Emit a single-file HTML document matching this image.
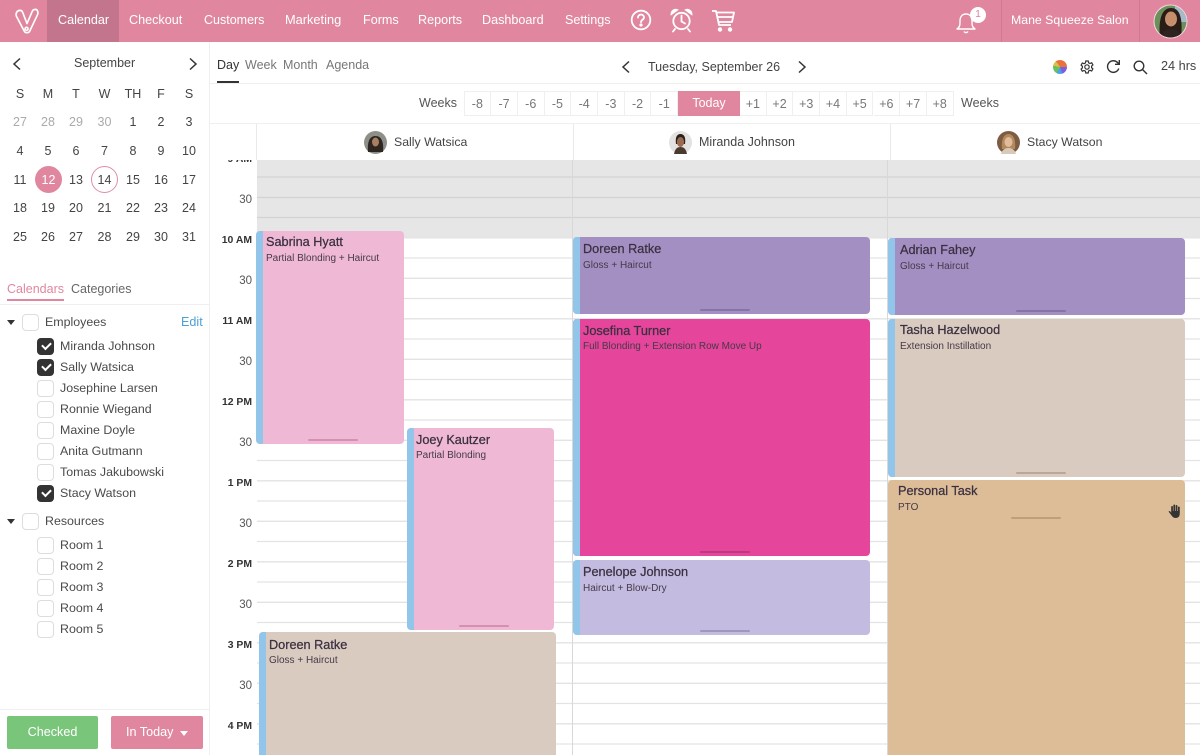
<!DOCTYPE html>
<html><head><meta charset="utf-8"><style>
html,body{margin:0;padding:0;background:#fff}
#p{position:relative;width:1200px;height:755px;overflow:hidden;background:#fff;font-family:"Liberation Sans",sans-serif;color:#444;font-size:13px}
#p div,#p span,#p svg{position:absolute}
#p span{white-space:nowrap;line-height:16px}
.n{color:#fff;top:12px;font-size:12.6px}
.d{width:28px;text-align:center;color:#444;font-size:12.5px}
.g{color:#aaa}
.w{top:91px;height:25px;width:26.7px;box-sizing:border-box;border:1px solid #efefef;border-left:0;text-align:center;line-height:24px;color:#777;font-size:12.5px}
.t{right:948px;text-align:right;color:#555;font-size:11.5px;margin-top:1px}
.b{font-weight:bold;color:#333;font-size:10.4px}
.e{border-radius:4px;overflow:hidden}
.e i{position:absolute;left:0;top:0;bottom:0;width:7px;background:#92c5ea}
.nm{font-size:12.7px;color:#3a3040;-webkit-text-stroke:.25px #3a3040}
.sb{font-size:10px;color:#443a48;margin-top:1px}
.h{height:2px;width:50px;border-radius:1px}
.c{width:15px;height:15px;border:1px solid #ddd;border-radius:4px;background:#fff}
.k{width:17px;height:17px;border-radius:4px;background:#333}
.k:after{content:"";position:absolute;left:4.5px;top:3px;width:7px;height:4px;border:solid #fff;border-width:0 0 2px 2px;transform:rotate(-45deg);transform-origin:center;margin-top:1px}
.l{left:60px;font-size:12.4px;color:#4a4a4a}
.ch{font-size:12.3px;color:#444;top:134px}
</style></head><body><div id="p">

<!-- top bar -->
<div style="left:0;top:0;width:1200px;height:42px;background:#e0879f"></div>
<div style="left:47px;top:0;width:72px;height:42px;background:#c4758e"></div>
<svg style="left:14px;top:8px" width="26" height="26" viewBox="0 0 30 30" fill="none" stroke="#fff" stroke-width="1.900" stroke-linejoin="round"><path d="M3 5c2-3 6-3 7 0l5 13 6-14c1-3 5-3 6-1s1 3 0 5L18 27c-1 2-5 2-6 0L3 10c-1-2-1-3 0-5z"/><circle cx="14.500" cy="24" r="1.700"/></svg>
<span class="n" style="left:58px">Calendar</span>
<span class="n" style="left:129px">Checkout</span>
<span class="n" style="left:204px;font-size:12.500px">Customers</span>
<span class="n" style="left:285px;font-size:12.800px">Marketing</span>
<span class="n" style="left:363px">Forms</span>
<span class="n" style="left:418px">Reports</span>
<span class="n" style="left:482px">Dashboard</span>
<span class="n" style="left:565px">Settings</span>
<svg style="left:630px;top:9px" width="22" height="22" viewBox="0 0 22 22" fill="none" stroke="#fff" stroke-width="1.800"><circle cx="11" cy="11" r="9.300"/><path d="M8 8.600c0-4 6-4 6-.2 0 2.400-3 2.300-3 4.800" stroke-linecap="round"/><circle cx="11" cy="16" r=".7"/></svg>
<svg style="left:670px;top:8px" width="23" height="25" viewBox="0 0 23 25" fill="none" stroke="#fff" stroke-width="1.800" stroke-linecap="round"><circle cx="11.500" cy="13" r="8.200"/><path d="M11.500 7.500V13.500L15 15.500"/><path d="M1.500 6c0-3 3-5 5.500-4zM21.500 6c0-3-3-5-5.500-4z"/><path d="M5 21l-2 2.500M18 21l2 2.500"/></svg>
<svg style="left:711px;top:9px" width="25" height="24" viewBox="0 0 25 24" fill="none" stroke="#fff" stroke-width="1.800" stroke-linejoin="round"><path d="M1 2h4l3 14h12"/><path d="M5.500 3.500H23l-2 9.500H7.500"/><path d="M6.500 8H22"/><circle cx="9" cy="20.500" r="1.300" fill="#fff"/><circle cx="19" cy="20.500" r="1.300" fill="#fff"/></svg>
<svg style="left:956px;top:10px" width="22" height="24" viewBox="0 0 22 24" fill="none" stroke="#fff" stroke-width="1.400"><path d="M1 19c3-2 3-4 3-8s2-7 6-7 6 3 6 7 0 6 3 8z" stroke-linejoin="round"/><path d="M8 21.500c1 1.500 3 1.500 4 0"/></svg>
<div style="left:970px;top:7px;width:16px;height:16px;border-radius:50%;background:#fff;color:#d9849c;font-size:10px;text-align:center;line-height:16px">1</div>
<div style="left:1001px;top:0;width:1px;height:42px;background:#cf7a92"></div>
<div style="left:1139px;top:0;width:1px;height:42px;background:#cf7a92"></div>
<span class="n" style="left:1011px;font-size:12.300px">Mane Squeeze Salon</span>
<svg style="left:1153px;top:4px" width="35" height="35" viewBox="0 0 35 35"><defs><clipPath id="a0"><circle cx="17.500" cy="17.500" r="16"/></clipPath></defs><circle cx="17.500" cy="17.500" r="17" fill="#f3d9e0"/><g clip-path="url(#a0)"><rect width="35" height="35" fill="#6d8f5c"/><rect x="22" width="13" height="18" fill="#a8b9c9"/><path d="M7 35C5 15 9 4 18 4s12 10 10 31z" fill="#2a1d18"/><ellipse cx="18" cy="15" rx="6" ry="7.500" fill="#c68e6b"/><path d="M13 18c2 3 8 3 10 0-1 3-9 3-10 0z" fill="#fff"/><path d="M8 35c1-8 5-10 10-10s9 2 10 10z" fill="#2e2320"/></g></svg>

<!-- structure lines -->
<div style="left:209px;top:42px;width:1px;height:713px;background:#efefef"></div>
<div style="left:210px;top:83px;width:990px;height:1px;background:#efefef"></div>
<div style="left:210px;top:123px;width:990px;height:1px;background:#efefef"></div>

<!-- mini calendar -->
<svg style="left:11px;top:57px" width="12" height="14" viewBox="0 0 12 14" fill="none" stroke="#333" stroke-width="1.500"><path d="M9 1.500L3 7l6 5.500"/></svg>
<svg style="left:187px;top:57px" width="12" height="14" viewBox="0 0 12 14" fill="none" stroke="#333" stroke-width="1.500"><path d="M3 1.500L9 7l-6 5.500"/></svg>
<span style="left:74px;top:55px;font-size:12.500px;color:#444">September</span>
<span class="d" style="left:6px;top:86px">S</span><span class="d" style="left:34px;top:86px">M</span><span class="d" style="left:62px;top:86px">T</span><span class="d" style="left:90.500px;top:86px">W</span><span class="d" style="left:119px;top:86px">TH</span><span class="d" style="left:147px;top:86px">F</span><span class="d" style="left:175px;top:86px">S</span>
<span class="d g" style="left:6px;top:114px">27</span><span class="d g" style="left:34px;top:114px">28</span><span class="d g" style="left:62px;top:114px">29</span><span class="d g" style="left:90.500px;top:114px">30</span><span class="d" style="left:119px;top:114px">1</span><span class="d" style="left:147px;top:114px">2</span><span class="d" style="left:175px;top:114px">3</span>
<span class="d" style="left:6px;top:143px">4</span><span class="d" style="left:34px;top:143px">5</span><span class="d" style="left:62px;top:143px">6</span><span class="d" style="left:90.500px;top:143px">7</span><span class="d" style="left:119px;top:143px">8</span><span class="d" style="left:147px;top:143px">9</span><span class="d" style="left:175px;top:143px">10</span>
<div style="left:35px;top:166px;width:27px;height:27px;border-radius:50%;background:#e0879f"></div>
<div style="left:91px;top:166px;width:25px;height:25px;border-radius:50%;border:1px solid #dd8fa5"></div>
<span class="d" style="left:6px;top:172px">11</span><span class="d" style="left:34.500px;top:172px;color:#fff">12</span><span class="d" style="left:62px;top:172px">13</span><span class="d" style="left:90.500px;top:172px">14</span><span class="d" style="left:119px;top:172px">15</span><span class="d" style="left:147px;top:172px">16</span><span class="d" style="left:175px;top:172px">17</span>
<span class="d" style="left:6px;top:200px">18</span><span class="d" style="left:34px;top:200px">19</span><span class="d" style="left:62px;top:200px">20</span><span class="d" style="left:90.500px;top:200px">21</span><span class="d" style="left:119px;top:200px">22</span><span class="d" style="left:147px;top:200px">23</span><span class="d" style="left:175px;top:200px">24</span>
<span class="d" style="left:6px;top:229px">25</span><span class="d" style="left:34px;top:229px">26</span><span class="d" style="left:62px;top:229px">27</span><span class="d" style="left:90.500px;top:229px">28</span><span class="d" style="left:119px;top:229px">29</span><span class="d" style="left:147px;top:229px">30</span><span class="d" style="left:175px;top:229px">31</span>

<!-- sidebar list -->
<span style="left:7px;top:281px;color:#e0879f;font-size:12.500px">Calendars</span>
<span style="left:71px;top:281px;color:#666;font-size:12.500px">Categories</span>
<div style="left:7px;top:299px;width:57px;height:2px;background:#e0879f"></div>
<div style="left:0;top:304px;width:209px;height:1px;background:#efefef"></div>
<div style="left:7px;top:320px;width:0;height:0;border:4px solid transparent;border-top:5px solid #333"></div>
<div class="c" style="left:22px;top:314px"></div>
<span class="l" style="left:45px;top:314px">Employees</span>
<span style="left:181px;top:314px;color:#4a9fd8;font-size:12.600px">Edit</span>
<div class="k" style="left:37px;top:338px"></div><span class="l" style="top:338px">Miranda Johnson</span>
<div class="k" style="left:37px;top:359px"></div><span class="l" style="top:359px">Sally Watsica</span>
<div class="c" style="left:37px;top:380px"></div><span class="l" style="top:380px">Josephine Larsen</span>
<div class="c" style="left:37px;top:401px"></div><span class="l" style="top:401px">Ronnie Wiegand</span>
<div class="c" style="left:37px;top:422px"></div><span class="l" style="top:422px">Maxine Doyle</span>
<div class="c" style="left:37px;top:443px"></div><span class="l" style="top:443px">Anita Gutmann</span>
<div class="c" style="left:37px;top:464px"></div><span class="l" style="top:464px">Tomas Jakubowski</span>
<div class="k" style="left:37px;top:485px"></div><span class="l" style="top:485px">Stacy Watson</span>
<div style="left:7px;top:519px;width:0;height:0;border:4px solid transparent;border-top:5px solid #333"></div>
<div class="c" style="left:22px;top:513px"></div>
<span class="l" style="left:45px;top:513px">Resources</span>
<div class="c" style="left:37px;top:537px"></div><span class="l" style="top:537px">Room 1</span>
<div class="c" style="left:37px;top:558px"></div><span class="l" style="top:558px">Room 2</span>
<div class="c" style="left:37px;top:579px"></div><span class="l" style="top:579px">Room 3</span>
<div class="c" style="left:37px;top:600px"></div><span class="l" style="top:600px">Room 4</span>
<div class="c" style="left:37px;top:621px"></div><span class="l" style="top:621px">Room 5</span>
<div style="left:0;top:709px;width:209px;height:1px;background:#efefef"></div>
<div style="left:7px;top:716px;width:91px;height:33px;border-radius:2px;background:#79c67a;color:#fff;text-align:center;line-height:32px;font-size:12.600px">Checked</div>
<div style="left:111px;top:716px;width:92px;height:33px;border-radius:2px;background:#e0879f"></div>
<span style="left:126px;top:724px;color:#fff;font-size:12.600px">In Today</span>
<div style="left:180px;top:731px;width:0;height:0;border:4px solid transparent;border-top:5px solid #fff"></div>

<!-- view tabs -->
<span style="left:217px;top:57px;color:#333;font-size:12.500px">Day</span>
<span style="left:245px;top:57px;color:#777;font-size:12.500px">Week</span>
<span style="left:283px;top:57px;color:#777;font-size:12.500px">Month</span>
<span style="left:326px;top:57px;color:#777;font-size:12.500px">Agenda</span>
<div style="left:217px;top:81px;width:22px;height:2px;background:#333"></div>
<svg style="left:620px;top:60px" width="12" height="14" viewBox="0 0 12 14" fill="none" stroke="#333" stroke-width="1.500"><path d="M9 1.500L3 7l6 5.500"/></svg>
<svg style="left:796px;top:60px" width="12" height="14" viewBox="0 0 12 14" fill="none" stroke="#333" stroke-width="1.500"><path d="M3 1.500L9 7l-6 5.500"/></svg>
<span style="left:648px;top:58.500px;font-size:12.500px;color:#444">Tuesday, September 26</span>
<div style="left:1053px;top:60px;width:14px;height:14px;border-radius:50%;background:conic-gradient(#e8743c 0 25%,#7a5fe0 25% 45%,#4aa3e0 45% 58%,#6cbf5f 58% 78%,#d9c24a 78% 90%,#e8743c 90%)"></div>
<svg style="left:1080px;top:60px" width="14" height="14" viewBox="0 0 14 14" fill="none" stroke="#333" stroke-width="1.200"><path d="M5.800 1h2.400l.4 1.800 1.400.7 1.700-.7 1.200 2.100-1.300 1.200v1.600l1.300 1.200-1.200 2.100-1.700-.7-1.400.7L8.200 13H5.800l-.4-1.800-1.400-.7-1.700.7-1.200-2.100 1.300-1.200V6.300L1.100 5.100l1.200-2.100 1.700.7 1.400-.7z"/><circle cx="7" cy="7" r="2.200"/></svg>
<svg style="left:1106px;top:59px" width="15" height="15" viewBox="0 0 15 15" fill="none" stroke="#333" stroke-width="1.400"><path d="M12.800 9.500A5.800 5.800 0 1 1 11.500 3.500L13 5"/><path d="M13.300 1v4.300H9"/></svg>
<svg style="left:1133px;top:60px" width="15" height="15" viewBox="0 0 15 15" fill="none" stroke="#333" stroke-width="1.400"><circle cx="6" cy="6" r="4.800"/><path d="M9.500 9.500L14 14"/></svg>
<span style="left:1161px;top:58px;font-size:12.700px;color:#444">24 hrs</span>

<!-- week buttons -->
<span style="left:419px;top:95px;font-size:12.500px;color:#555">Weeks</span>
<div style="left:464px;top:91px;width:1px;height:25px;background:#efefef"></div>
<div class="w" style="left:464.500px">-8</div><div class="w" style="left:491.200px">-7</div><div class="w" style="left:517.900px">-6</div><div class="w" style="left:544.600px">-5</div><div class="w" style="left:571.300px">-4</div><div class="w" style="left:598px">-3</div><div class="w" style="left:624.700px">-2</div><div class="w" style="left:651.400px">-1</div>
<div style="left:678px;top:91px;width:62px;height:25px;background:#e0879f;color:#fff;text-align:center;line-height:25px;font-size:12.500px">Today</div>
<div class="w" style="left:740px">+1</div><div class="w" style="left:766.700px">+2</div><div class="w" style="left:793.400px">+3</div><div class="w" style="left:820.100px">+4</div><div class="w" style="left:846.800px">+5</div><div class="w" style="left:873.500px">+6</div><div class="w" style="left:900.200px">+7</div><div class="w" style="left:926.900px">+8</div>
<span style="left:961px;top:95px;font-size:12.500px;color:#555">Weeks</span>

<!-- column headers -->
<div style="left:256px;top:124px;width:1px;height:36px;background:#e9e9e9"></div>
<div style="left:573px;top:124px;width:1px;height:36px;background:#e9e9e9"></div>
<div style="left:890px;top:124px;width:1px;height:36px;background:#e9e9e9"></div>
<svg style="left:364px;top:131px" width="23" height="23" viewBox="0 0 23 23"><circle cx="11.500" cy="11.500" r="11.500" fill="#8f8f8a"/><path d="M4 21C3 10 6 5 11.500 5S20 10 19 21z" fill="#2e2621"/><ellipse cx="11.500" cy="11" rx="3.500" ry="4.500" fill="#a97f63"/></svg>
<span class="ch" style="left:394px">Sally Watsica</span>
<svg style="left:669px;top:131px" width="23" height="23" viewBox="0 0 23 23"><circle cx="11.500" cy="11.500" r="11.500" fill="#e4e2e0"/><path d="M7 13C6 6 8 3 11.500 3S17 6 16 13z" fill="#2b211c"/><ellipse cx="11.500" cy="11" rx="3.600" ry="5" fill="#9a6b4e"/><path d="M5 23c1-5 3-7 6.500-7S17 18 18 23z" fill="#4a3a32"/></svg>
<span class="ch" style="left:699px;font-size:12.500px">Miranda Johnson</span>
<svg style="left:997px;top:131px" width="23" height="23" viewBox="0 0 23 23"><circle cx="11.500" cy="11.500" r="11.500" fill="#7d5c42"/><path d="M5 18C4 8 7 3 11.500 3S19 8 18 18z" fill="#b08a5c"/><ellipse cx="11.500" cy="11" rx="4" ry="5" fill="#e3bb9a"/><path d="M4 23c1-4 4-6 7.500-6s6.500 2 7.500 6z" fill="#d9c9b8"/></svg>
<span class="ch" style="left:1027px">Stacy Watson</span>

<!-- grid -->
<div style="left:257px;top:160px;width:943px;height:78px;background:#e6e6e6"></div>
<svg style="left:257px;top:160px" width="943" height="595" viewBox="257 160 943 595" stroke-width="1.300">
<g stroke="#d2d2d2"><path d="M257 177H1200M257 197.500H1200M257 217.500H1200"/></g>
<g stroke="#e3e3e3"><path d="M257 237.800H1200M257 258H1200M257 278.300H1200M257 298.500H1200M257 318.800H1200M257 339H1200M257 359.300H1200M257 379.500H1200M257 399.800H1200M257 420H1200M257 440.300H1200M257 460.500H1200M257 480.800H1200M257 501H1200M257 521.300H1200M257 541.500H1200M257 561.800H1200M257 582H1200M257 602.300H1200M257 622.500H1200M257 642.800H1200M257 663H1200M257 683.300H1200M257 703.500H1200M257 723.800H1200M257 744H1200"/></g>
<g stroke="#d8d8d8" stroke-width="1"><path d="M572.500 160V755M887.500 160V755"/></g>
</svg>
<div style="left:210px;top:160px;width:46px;height:595px;background:#fff"></div>

<!-- time labels -->
<span class="t b" style="top:151px;clip-path:inset(8px 0 0 0)">9 AM</span>
<span class="t" style="top:191px">30</span>
<span class="t b" style="top:232px">10 AM</span>
<span class="t" style="top:272px">30</span>
<span class="t b" style="top:313px">11 AM</span>
<span class="t" style="top:353px">30</span>
<span class="t b" style="top:394px">12 PM</span>
<span class="t" style="top:434px">30</span>
<span class="t b" style="top:475px">1 PM</span>
<span class="t" style="top:515px">30</span>
<span class="t b" style="top:556px">2 PM</span>
<span class="t" style="top:596px">30</span>
<span class="t b" style="top:637px">3 PM</span>
<span class="t" style="top:677px">30</span>
<span class="t b" style="top:718px">4 PM</span>

<!-- events -->
<div class="e" style="left:256px;top:231px;width:148px;height:213px;background:#efb8d4"><i></i></div>
<span class="nm" style="left:266px;top:234px">Sabrina Hyatt</span><span class="sb" style="left:266px;top:250px">Partial Blonding + Haircut</span>
<div class="h" style="left:308px;top:439px;background:#d58fb0"></div>

<div class="e" style="left:406.500px;top:428px;width:147.500px;height:202px;background:#efb8d4"><i></i></div>
<span class="nm" style="left:416px;top:432px">Joey Kautzer</span><span class="sb" style="left:416px;top:447px">Partial Blonding</span>
<div class="h" style="left:459px;top:625px;background:#d58fb0"></div>

<div class="e" style="left:259px;top:632px;width:297px;height:140px;background:#dacbc0"><i></i></div>
<span class="nm" style="left:269px;top:637px">Doreen Ratke</span><span class="sb" style="left:269px;top:652px">Gloss + Haircut</span>

<div class="e" style="left:572.500px;top:237px;width:297.500px;height:77px;background:#a48fc3"><i></i></div>
<span class="nm" style="left:583px;top:241px">Doreen Ratke</span><span class="sb" style="left:583px;top:257px">Gloss + Haircut</span>
<div class="h" style="left:700px;top:309px;background:#8673a8"></div>

<div class="e" style="left:572.500px;top:319px;width:297.500px;height:237px;background:#e5459a"><i></i></div>
<span class="nm" style="left:583px;top:323px">Josefina Turner</span><span class="sb" style="left:583px;top:338px">Full Blonding + Extension Row Move Up</span>
<div class="h" style="left:700px;top:551px;background:#bb3a80"></div>

<div class="e" style="left:572.500px;top:560px;width:297.500px;height:75px;background:#c3bce0"><i></i></div>
<span class="nm" style="left:583px;top:564px">Penelope Johnson</span><span class="sb" style="left:583px;top:580px">Haircut + Blow-Dry</span>
<div class="h" style="left:700px;top:630px;background:#9f98bd"></div>

<div class="e" style="left:887.500px;top:238px;width:297.500px;height:77px;background:#a48fc3"><i></i></div>
<span class="nm" style="left:900px;top:242px">Adrian Fahey</span><span class="sb" style="left:900px;top:258px">Gloss + Haircut</span>
<div class="h" style="left:1016px;top:310px;background:#8673a8"></div>

<div class="e" style="left:887.500px;top:319px;width:297.500px;height:158px;background:#dacbc0"><i></i></div>
<span class="nm" style="left:900px;top:322px">Tasha Hazelwood</span><span class="sb" style="left:900px;top:338px">Extension Instillation</span>
<div class="h" style="left:1016px;top:472px;background:#b8a79b"></div>

<div class="e" style="left:887.500px;top:480px;width:297.500px;height:290px;background:#dcbd98"></div>
<span class="nm" style="left:898px;top:483px">Personal Task</span><span class="sb" style="left:898px;top:499px">PTO</span>
<div class="h" style="left:1011px;top:517px;background:#bd9f7d"></div>
<svg style="left:1168px;top:504px" width="14" height="14" viewBox="0 0 14 14" fill="#333"><rect x="3.200" y="2" width="1.700" height="7" rx=".8"/><rect x="5.400" y=".5" width="1.700" height="8" rx=".8"/><rect x="7.700" y="1" width="1.700" height="8" rx=".8"/><rect x="10" y="2.500" width="1.700" height="7" rx=".8"/><path d="M.5 7.500c.7-.6 1.500-.3 2.200.4L3.500 9V7h8.200v3c0 2.500-1.700 4-4 4-2.500 0-3.500-1.500-4.700-3.200z"/></svg>

</div></body></html>
